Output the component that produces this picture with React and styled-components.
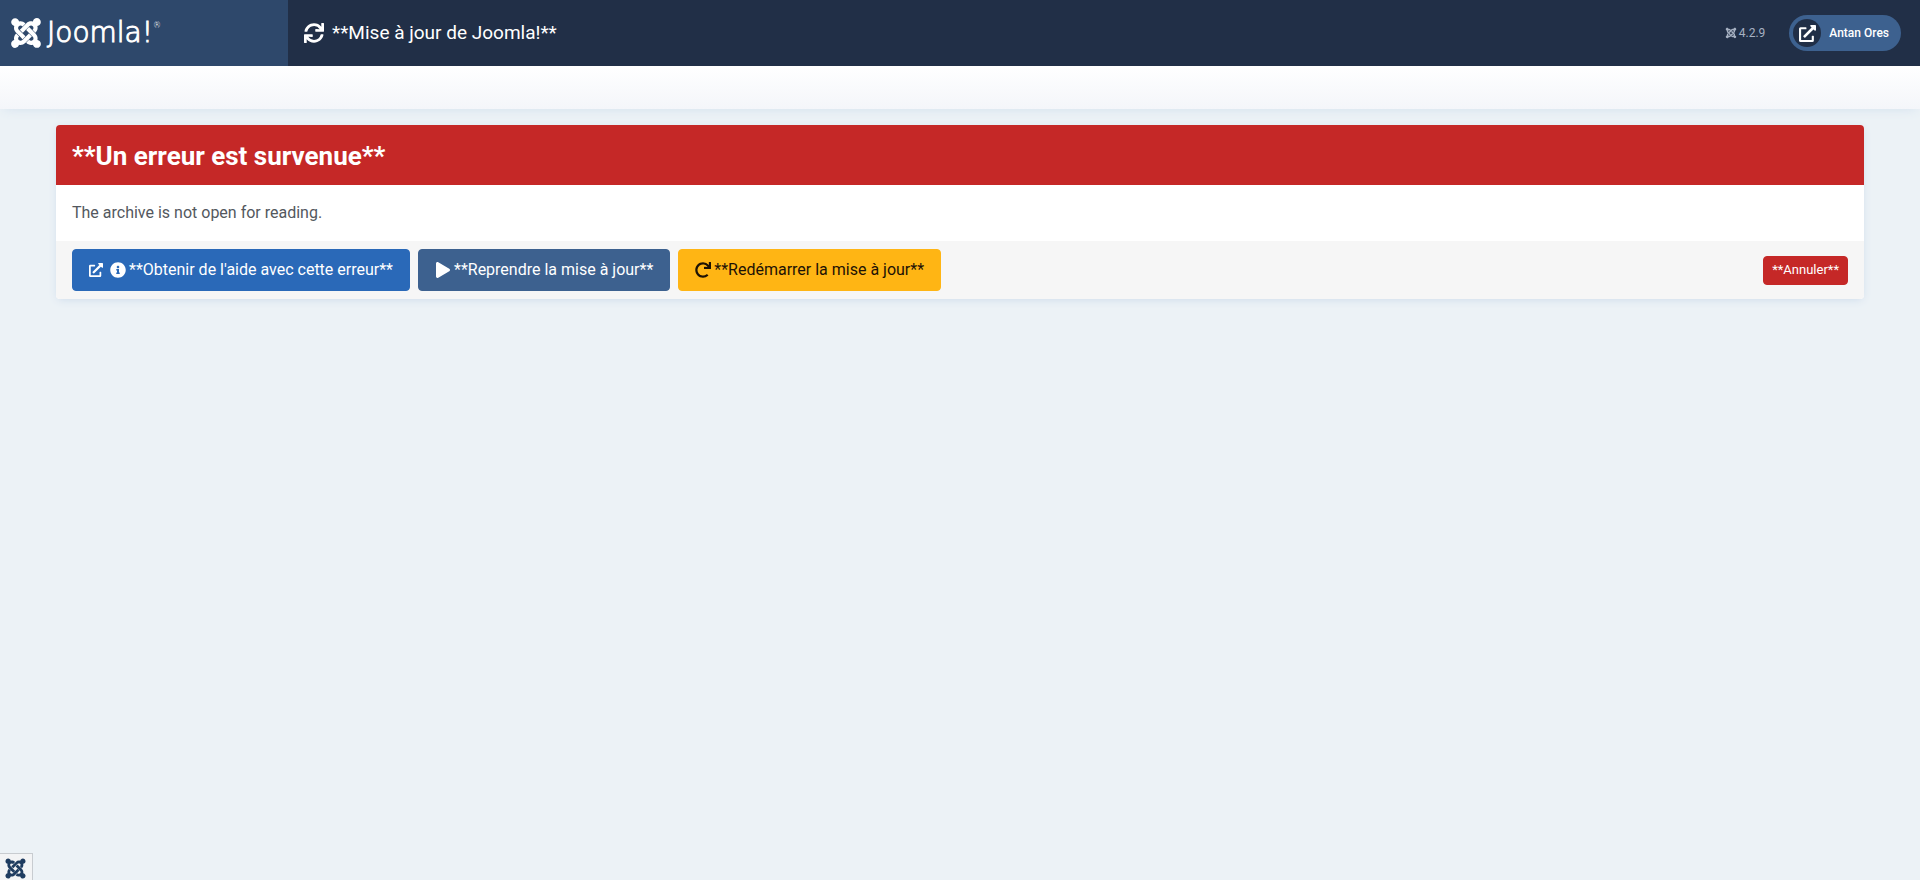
import React from 'react';
import styled, { createGlobalStyle } from 'styled-components';
import { FaExternalLinkAlt, FaInfoCircle, FaJoomla, FaPlay, FaRedo, FaSync } from 'react-icons/fa';

const GlobalStyle = createGlobalStyle`
* {
    box-sizing: border-box;
}

body {
    margin: 0;
    background: #ecf2f6;
    color: #53585e;
    font-family: Roboto, "Liberation Sans", sans-serif;
    font-size: 16px;
    line-height: 24px;
}
`;

const Header = styled.header`
    position: relative;
    z-index: 1;
    display: flex;
    height: 66px;
    background: #212f47;
    color: #fff;
`;

const Logo = styled.a`
    display: flex;
    align-items: center;
    gap: 4px;
    width: 288px;
    padding-left: 9px;
    background: #2e486b;
    color: #fff;
    text-decoration: none;
`;

const LogoText = styled.span`
    display: flex;
    font-family: "DejaVu Sans", sans-serif;
    font-size: 28px;
    font-weight: 200;
    line-height: 32px;
    -webkit-text-stroke: 1px #fff;

    sup {
        font-size: 8px;
        line-height: 18px;
        -webkit-text-stroke: 0;
    }
`;

const PageTitle = styled.h1`
    display: flex;
    flex: 1;
    align-items: center;
    gap: 8px;
    margin: 0;
    padding-left: 16px;
    font-size: 19px;
    font-weight: 400;
`;

const HeaderItems = styled.div`
    display: flex;
    align-items: center;
    gap: 24px;
    padding-right: 19px;
    font-size: 12px;
`;

const Version = styled.span`
    display: flex;
    align-items: center;
    gap: 2px;
    color: #a6b1c2;
`;

const UserLink = styled.a`
    display: flex;
    align-items: center;
    gap: 8px;
    height: 36px;
    padding: 0 12px 0 4px;
    border-radius: 18px;
    background: #3d618f;
    color: #fff;
    font-weight: 500;
    text-decoration: none;
`;

const UserIcon = styled.span`
    display: flex;
    align-items: center;
    justify-content: center;
    width: 28px;
    height: 28px;
    border-radius: 50%;
    background: #212f47;
`;

const Subhead = styled.div`
    height: 43px;
    background: linear-gradient(#fff, #f4f6fa);
    box-shadow: 0 4px 12px -4px #d3e0ee;
`;

const Content = styled.main`
    padding: 16px 56px;
`;

const Card = styled.section`
    overflow: hidden;
    border-radius: 4px;
    background: #fff;
    box-shadow: 0 2px 10px -2px #c9d8ea;
`;

const CardTitle = styled.h2`
    margin: 0;
    padding: 15px 16px 13px;
    background: #c52827;
    color: #fff;
    font-size: 26px;
    font-weight: 700;
    line-height: 32px;
`;

const CardBody = styled.p`
    margin: 0;
    padding: 16px;
`;

const CardFooter = styled.div`
    display: flex;
    align-items: center;
    gap: 8px;
    padding: 8px 16px;
    background: #f6f6f6;
`;

const tones = {
    info: { background: '#2a69b8', color: '#fff' },
    primary: { background: '#3d618f', color: '#fff' },
    warning: { background: '#ffb514', color: '#1d1205' },
    danger: { background: '#c52827', color: '#fff' },
};

const Button = styled.button`
    display: flex;
    align-items: center;
    gap: 3px;
    height: ${({ $small }) => ($small ? '29px' : '42px')};
    margin-left: ${({ $end }) => ($end ? 'auto' : '0')};
    padding: 0 ${({ $small }) => ($small ? '8px' : '16px')};
    border: 1px solid ${({ $tone }) => tones[$tone].background};
    border-radius: 4px;
    background: ${({ $tone }) => tones[$tone].background};
    color: ${({ $tone }) => tones[$tone].color};
    font-family: inherit;
    font-size: ${({ $small }) => ($small ? '13px' : '16px')};
    font-weight: 400;
    line-height: 24px;
    text-decoration: none;
    cursor: pointer;
`;

const NewTabIcon = styled(FaExternalLinkAlt)`
    margin-right: 4px;
`;

const DebugBar = styled.button`
    position: fixed;
    bottom: 0;
    left: 0;
    display: flex;
    align-items: center;
    justify-content: center;
    width: 33px;
    height: 27px;
    padding: 2px 4px 0 2px;
    border: solid #c8ccd0;
    border-width: 1px 1px 0 0;
    background: #f3f4f5;
    color: #1f3c5f;
    cursor: pointer;
`;

const App = () => (
    <>
        <GlobalStyle />
        <Header>
            <Logo href="#" aria-label="Joomla!">
                <FaJoomla size={34} />
                <LogoText>Joomla!<sup>®</sup></LogoText>
            </Logo>
            <PageTitle>
                <FaSync size={20} />
                **Mise à jour de Joomla!**
            </PageTitle>
            <HeaderItems>
                <Version><FaJoomla />4.2.9</Version>
                <UserLink href="#">
                    <UserIcon><FaExternalLinkAlt size={17} /></UserIcon>
                    Antan Ores
                </UserLink>
            </HeaderItems>
        </Header>
        <Subhead />
        <Content>
            <Card>
                <CardTitle>**Un erreur est survenue**</CardTitle>
                <CardBody>The archive is not open for reading.</CardBody>
                <CardFooter>
                    <Button as="a" href="#" $tone="info">
                        <NewTabIcon size={14} />
                        <FaInfoCircle />
                        **Obtenir de l'aide avec cette erreur**
                    </Button>
                    <Button type="button" $tone="primary">
                        <FaPlay />
                        **Reprendre la mise à jour**
                    </Button>
                    <Button type="button" $tone="warning">
                        <FaRedo />
                        **Redémarrer la mise à jour**
                    </Button>
                    <Button type="button" $tone="danger" $small $end>**Annuler**</Button>
                </CardFooter>
            </Card>
        </Content>
        <DebugBar type="button" aria-label="Debug">
            <FaJoomla size={23} />
        </DebugBar>
    </>
);

export default App;
